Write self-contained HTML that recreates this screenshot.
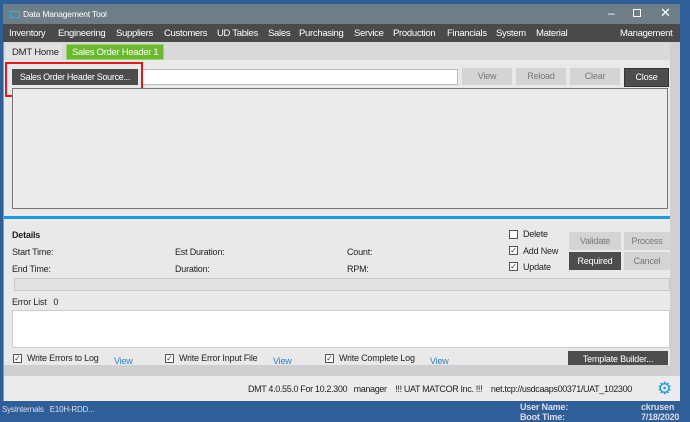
<!DOCTYPE html>
<html><head><style>
*{margin:0;padding:0;box-sizing:border-box}
body{width:690px;height:421px;overflow:hidden;background:#2f5f98;font-family:"Liberation Sans",sans-serif;font-size:9px;letter-spacing:-0.2px;position:relative;color:#222}
.a{position:absolute;white-space:nowrap}
.btn{position:absolute;text-align:center;line-height:17px;background:#d4d4d4;color:#777;font-size:9px}
.dk{background:#4d4d4d;color:#fff}
.cb{position:absolute;width:9px;height:9px;border:1px solid #555;background:#fff;font-size:8px;line-height:8px;text-align:center;color:#333;letter-spacing:0}
.view{color:#2a7fd0}
.m{position:absolute;top:28px;color:#fff;font-size:9.5px;letter-spacing:-0.3px;white-space:nowrap}
</style></head><body>
<div class="a" style="left:3px;top:4px;width:677px;height:397px;background:#e9e9e9;border:1px solid #8a9aa0"></div>
<div class="a" style="left:3px;top:4px;width:677px;height:20px;background:#6d7e86;color:#fff"></div>
<div class="a" style="left:10px;top:11px;width:10px;height:7px;border:1.5px solid #2fb0e8;border-radius:1px"></div>
<div class="a" style="left:23px;top:9px;color:#fff;font-size:8.5px">Data Management Tool</div>
<div class="a" style="left:608px;top:6px;color:#fff;font-size:12px">–</div>
<div class="a" style="left:633px;top:9px;width:8px;height:8px;border:1px solid #fff"></div>
<div class="a" style="left:660px;top:5px;color:#fff;font-size:13px">✕</div>
<div class="a" style="left:3px;top:24px;width:677px;height:18px;background:#4a4a4a"></div>
<div class="m" style="left:9px">Inventory</div>
<div class="m" style="left:58px">Engineering</div>
<div class="m" style="left:116px">Suppliers</div>
<div class="m" style="left:164px">Customers</div>
<div class="m" style="left:217px">UD Tables</div>
<div class="m" style="left:268px">Sales</div>
<div class="m" style="left:299px">Purchasing</div>
<div class="m" style="left:354px">Service</div>
<div class="m" style="left:393px">Production</div>
<div class="m" style="left:447px">Financials</div>
<div class="m" style="left:496px">System</div>
<div class="m" style="left:536px">Material</div>
<div class="m" style="left:620px">Management</div>
<div class="a" style="left:4px;top:42px;width:666px;height:18px;background:#d9d9d9"></div>
<div class="a" style="left:6px;top:44px;width:56px;height:16px;background:#e2e2e2"></div>
<div class="a" style="left:12px;top:47px;font-size:9.5px">DMT Home</div>
<div class="a" style="left:66px;top:44px;width:98px;height:16px;background:#6ab92e;border:1px solid #9ad46a"></div>
<div class="a" style="left:72px;top:47px;color:#fff;font-size:9.5px;letter-spacing:-0.3px">Sales Order Header 1</div>
<div class="a" style="left:670px;top:42px;width:10px;height:334px;background:#d0d0d0"></div>
<div class="btn dk" style="left:12px;top:69px;width:126px;height:16px;line-height:16px;letter-spacing:-0.3px">Sales Order Header Source...</div>
<div class="a" style="left:142px;top:69px;width:316px;height:16px;background:#fff;border:1px solid #bbb"></div>
<div class="btn" style="left:462px;top:68px;width:50px">View</div>
<div class="btn" style="left:516px;top:68px;width:50px">Reload</div>
<div class="btn" style="left:570px;top:68px;width:50px">Clear</div>
<div class="btn dk" style="left:624px;top:68px;width:45px;border:1px solid #333">Close</div>
<div class="a" style="left:5px;top:62px;width:138px;height:35px;border:2px solid #e81818"></div>
<div class="a" style="left:12px;top:88px;width:656px;height:121px;border:1px solid #777;background:#ebebeb"></div>
<div class="a" style="left:4px;top:216px;width:666px;height:3px;background:#1a9be0"></div>
<div class="a" style="left:12px;top:230px;font-weight:bold">Details</div>
<div class="a" style="left:12px;top:247px">Start Time:</div>
<div class="a" style="left:12px;top:264px">End Time:</div>
<div class="a" style="left:175px;top:247px">Est Duration:</div>
<div class="a" style="left:175px;top:264px">Duration:</div>
<div class="a" style="left:347px;top:247px">Count:</div>
<div class="a" style="left:347px;top:264px">RPM:</div>
<div class="cb" style="left:509px;top:230px"></div><div class="a" style="left:523px;top:229px">Delete</div>
<div class="cb" style="left:509px;top:246px">✓</div><div class="a" style="left:523px;top:246px">Add New</div>
<div class="cb" style="left:509px;top:262px">✓</div><div class="a" style="left:523px;top:262px">Update</div>
<div class="btn" style="left:569px;top:232px;width:52px;height:18px;line-height:18px">Validate</div>
<div class="btn" style="left:624px;top:232px;width:46px;height:18px;line-height:18px">Process</div>
<div class="btn dk" style="left:569px;top:252px;width:52px;height:18px;line-height:18px">Required</div>
<div class="btn" style="left:624px;top:252px;width:46px;height:18px;line-height:18px">Cancel</div>
<div class="a" style="left:14px;top:278px;width:656px;height:13px;background:#e2e2e2;border:1px solid #c8c8c8"></div>
<div class="a" style="left:12px;top:297px">Error List &nbsp; 0</div>
<div class="a" style="left:12px;top:310px;width:658px;height:38px;background:#fff;border:1px solid #ccc"></div>
<div class="cb" style="left:13px;top:354px">✓</div><div class="a" style="left:27px;top:353px">Write Errors to Log</div><div class="a view" style="left:114px;top:356px">View</div>
<div class="cb" style="left:165px;top:354px">✓</div><div class="a" style="left:179px;top:353px">Write Error Input File</div><div class="a view" style="left:273px;top:356px">View</div>
<div class="cb" style="left:325px;top:354px">✓</div><div class="a" style="left:339px;top:353px">Write Complete Log</div><div class="a view" style="left:430px;top:356px">View</div>
<div class="btn dk" style="left:568px;top:351px;width:100px;height:16px;line-height:16px">Template Builder...</div>
<div class="a" style="left:4px;top:365px;width:666px;height:11px;background:#cfcfcf"></div>
<div class="a" style="left:4px;top:376px;width:676px;height:25px;background:#ebebeb"></div>
<div class="a" style="left:248px;top:384px;font-size:9px;letter-spacing:-0.35px;white-space:pre">DMT 4.0.55.0 For 10.2.300   manager    !!! UAT MATCOR Inc. !!!    net.tcp://usdcaaps00371/UAT_102300</div>
<div class="a" style="left:657px;top:379px;color:#1a9be0;font-size:17px">⚙</div>
<div class="a" style="left:2px;top:405px;color:#dde;font-size:8px">SysInternals &nbsp; E10H-RDD...</div>
<div class="a" style="left:520px;top:402px;color:#dde;font-size:9px;font-weight:bold;line-height:10px">User Name:<br>Boot Time:</div>
<div class="a" style="left:641px;top:402px;color:#dde;font-size:9px;font-weight:bold;line-height:10px">ckrusen<br>7/18/2020</div>
</body></html>
